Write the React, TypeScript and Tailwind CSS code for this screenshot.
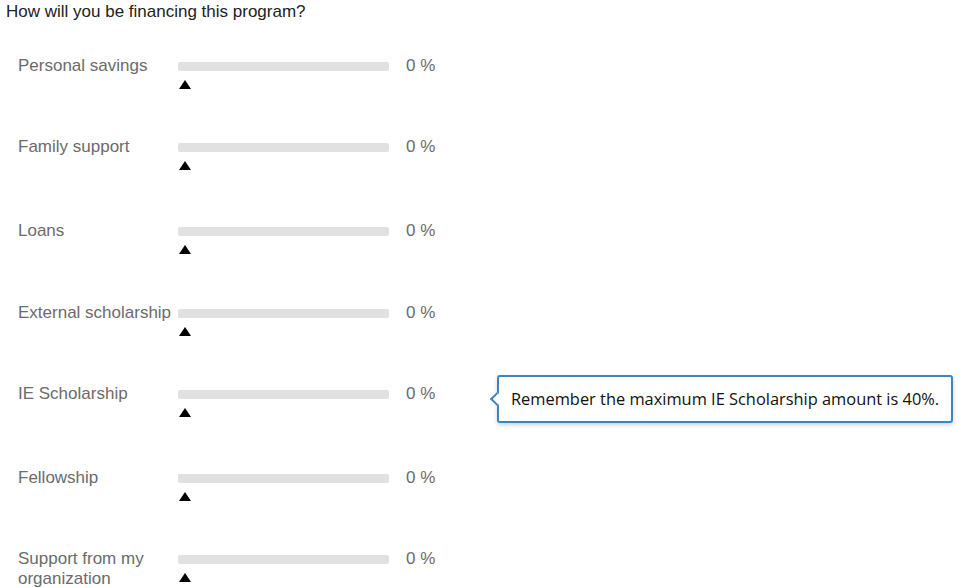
const sources = [
  { name: 'Personal savings', h: 'h-[81px]' },
  { name: 'Family support', h: 'h-[84px]' },
  { name: 'Loans', h: 'h-[82px]' },
  { name: 'External scholarship', h: 'h-[81px]' },
  { name: 'IE Scholarship', h: 'h-[84px]' },
  { name: 'Fellowship', h: 'h-[81px]' },
  { name: 'Support from my organization', h: 'h-[82px]' },
];

const Slider = () => (
  <div className="w-[211px] pt-[6px]">
    <div className="h-[9px] w-full rounded-[2px] bg-[#e1e1e1]" />
    <svg width="12" height="9" viewBox="0 0 12 9" className="mt-[9px] ml-[1px]">
      <polygon points="6,0 12,9 0,9" fill="#000" />
    </svg>
  </div>
);

const Tooltip = () => (
  <div className="absolute left-[497px] top-[-9px] flex h-[48px] w-[456px] items-center rounded-[3px] border-2 border-[#3b86c1] bg-white pl-[12px] shadow-[0_2px_4px_rgba(0,0,0,0.18)]">
    <div className="absolute left-[-7px] top-1/2 h-[10px] w-[10px] -translate-y-1/2 rotate-45 border-b-2 border-l-2 border-[#3b86c1] bg-white" />
    <span className="text-[16.4px] font-medium text-[#111] [font-family:'Open_Sans',sans-serif]">
      Remember the maximum IE Scholarship amount is 40%.
    </span>
  </div>
);

export default function App() {
  return (
    <div className="h-[588px] w-[961px] overflow-hidden bg-white pt-[1px] text-[17px] [font-family:'Liberation_Sans',Arial,sans-serif]">
      <h1 className="pl-[6px] leading-[22px] text-[#222]">How will you be financing this program?</h1>

      <div className="mt-[33px]">
        {sources.map(({ name, h }) => (
          <div key={name} className={`relative flex ${h} items-start pl-[18px] text-[#6b6b6b]`}>
            <div className="w-[160px] leading-[20px]">{name}</div>
            <Slider />
            <div className="ml-[17px] leading-[20px]">0 %</div>
            {name === 'IE Scholarship' && <Tooltip />}
          </div>
        ))}
      </div>
    </div>
  );
}
